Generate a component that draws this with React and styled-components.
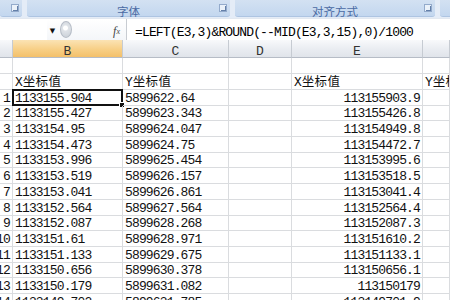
import styled, { createGlobalStyle } from 'styled-components';

const GlobalStyle = createGlobalStyle`
  html, body {
    margin: 0;
    padding: 0;
    background: #ffffff;
    overflow: hidden;
  }
`;

const Screen = styled.div`
  width: 450px;
  height: 300px;
  overflow: hidden;
  display: flex;
  flex-direction: column;
  font-family: 'Liberation Mono', 'Noto Sans CJK SC', monospace;
`;

/* ribbon group captions */
const Ribbon = styled.div`
  height: 18px;
  display: flex;
  gap: 5px;
  background: #e4ecf7;
  flex-shrink: 0;
`;

const Group = styled.div`
  position: relative;
  width: ${(p) => p.$w}px;
  flex-shrink: 0;
  height: 17px;
  background: linear-gradient(#d3e1f2, #c3d7ef);
  border-radius: 0 0 3px 3px;
  border-bottom: 1px solid #aec5e2;
  display: flex;
  align-items: center;
  justify-content: center;
  padding-top: 5px;
  box-sizing: border-box;
  font-family: 'Noto Sans CJK SC', sans-serif;
  font-size: 11.5px;
  color: #4a6aa3;
`;

const Launcher = styled.span`
  position: absolute;
  right: 3px;
  top: 4px;
  width: 8px;
  height: 8px;
  border: 1px solid #93aacb;
  background: #eaf1f9;
  box-sizing: border-box;
  &::after {
    content: '';
    position: absolute;
    right: 0;
    bottom: 0;
    width: 4px;
    height: 4px;
    border-right: 1px solid #6480a9;
    border-bottom: 1px solid #6480a9;
  }
`;

/* formula bar */
const FormulaBar = styled.div`
  height: 22px;
  display: flex;
  align-items: center;
  background: linear-gradient(#ffffff, #f4f6f9);
  border-top: 1px solid #e2e8f0;
  box-sizing: border-box;
  flex-shrink: 0;
`;

const NameBox = styled.div`
  width: 47px;
  height: 100%;
  background: #ffffff;
`;

const Arrow = styled.span`
  width: 11px;
  padding-top: 2px;
  font-size: 7px;
  color: #111;
  text-align: center;
  font-family: 'DejaVu Sans', sans-serif;
`;

const Handle = styled.span`
  width: 12px;
  height: 17px;
  margin-left: 2px;
  border-radius: 50%;
  border: 1px solid #b5bcc6;
  background: radial-gradient(circle at 45% 40%, #ffffff 0 2px, #dfe3e8 3px, #c8ced6 100%);
  box-sizing: border-box;
`;

const FxBox = styled.div`
  flex: 0 0 54px;
  height: 100%;
  display: flex;
  align-items: center;
  justify-content: flex-end;
  padding: 3px 6px 0 0;
  box-sizing: border-box;
  font-family: 'Liberation Serif', serif;
  font-style: italic;
  font-size: 12px;
  color: #444;
  sub {
    font-size: 8px;
    vertical-align: -1px;
  }
`;

const Formula = styled.div`
  flex: 1;
  height: 100%;
  background: #ffffff;
  border-left: 1px solid #c8ccd2;
  display: flex;
  align-items: center;
  padding: 5px 0 0 8px;
  box-sizing: border-box;
  font-size: 13px;
  letter-spacing: -0.85px;
  color: #000;
  white-space: nowrap;
`;

/* sheet */
const Sheet = styled.div`
  display: grid;
  grid-template-columns: 13px 110px 106px 63px 131px 27px;
  grid-template-rows: 18px 16px 16px repeat(14, 15.7px);
  overflow: hidden;
  flex-shrink: 0;
`;

const ColHead = styled.div`
  display: flex;
  align-items: center;
  justify-content: center;
  padding-top: 5px;
  border-right: 1px solid #c6cbd2;
  border-bottom: 1px solid #b6bcc6;
  background: ${(p) =>
    p.$active
      ? 'linear-gradient(#fbe3b4, #f7cf86 55%, #f3c06a)'
      : 'linear-gradient(#f8f9fb, #e9ecf1 55%, #e0e4ea)'};
  font-size: 13px;
  color: #333;
  box-sizing: border-box;
`;

const Cell = styled.div`
  position: relative;
  display: flex;
  align-items: flex-end;
  justify-content: ${(p) => (p.$right ? 'flex-end' : 'flex-start')};
  padding: 0 ${(p) => (p.$right ? '2px' : '0')} 0 ${(p) => (p.$right ? '0' : '2px')};
  border-right: 1px solid #dadcdf;
  border-bottom: 1px solid #dadcdf;
  box-sizing: border-box;
  font-size: 13px;
  letter-spacing: -0.85px;
  color: #111;
  white-space: nowrap;
  overflow: ${(p) => (p.$clip ? 'hidden' : 'visible')};
  line-height: 13px;
`;

const Label = styled.span`
  letter-spacing: 0;
  font-size: 13px;
  span {
    font-family: 'Noto Sans CJK SC', sans-serif;
    font-size: 12.5px;
    letter-spacing: 0.3px;
  }
`;

const Selection = styled.span`
  position: absolute;
  left: -1px;
  top: -1px;
  right: -1px;
  bottom: -1px;
  border: 2px solid #111;
  pointer-events: none;
  &::after {
    content: '';
    position: absolute;
    right: -4px;
    bottom: -4px;
    width: 4px;
    height: 4px;
    background: #111;
    border: 1px solid #fff;
  }
`;

const xs = [
  '1133155.904', '1133155.427', '1133154.95', '1133154.473', '1133153.996',
  '1133153.519', '1133153.041', '1133152.564', '1133152.087', '1133151.61',
  '1133151.133', '1133150.656', '1133150.179', '1133149.702',
];
const ys = [
  '5899622.64', '5899623.343', '5899624.047', '5899624.75', '5899625.454',
  '5899626.157', '5899626.861', '5899627.564', '5899628.268', '5899628.971',
  '5899629.675', '5899630.378', '5899631.082', '5899631.785',
];
const es = [
  '113155903.9', '113155426.8', '113154949.8', '113154472.7', '113153995.6',
  '113153518.5', '113153041.4', '113152564.4', '113152087.3', '113151610.2',
  '113151133.1', '113150656.1', '113150179', '113149701.9',
];

const Heading = ({ letter }) => (
  <Label>
    {letter}
    <span>坐标值</span>
  </Label>
);

export default function App() {
  return (
    <Screen>
      <GlobalStyle />
      <Ribbon>
        <Group $w={22}>
          <Launcher />
        </Group>
        <Group $w={203}>
          字体
          <Launcher />
        </Group>
        <Group $w={200}>
          对齐方式
          <Launcher />
        </Group>
        <Group $w={20} />
      </Ribbon>

      <FormulaBar>
        <NameBox />
        <Arrow>▼</Arrow>
        <Handle />
        <FxBox>
          f<sub>x</sub>
        </FxBox>
        <Formula>=LEFT(E3,3)&amp;ROUND(--MID(E3,3,15),0)/1000</Formula>
      </FormulaBar>

      <Sheet>
        <ColHead />
        <ColHead $active>B</ColHead>
        <ColHead>C</ColHead>
        <ColHead>D</ColHead>
        <ColHead>E</ColHead>
        <ColHead />

        <Cell />
        <Cell />
        <Cell />
        <Cell />
        <Cell />
        <Cell />

        <Cell />
        <Cell>
          <Heading letter="X" />
        </Cell>
        <Cell>
          <Heading letter="Y" />
        </Cell>
        <Cell />
        <Cell>
          <Heading letter="X" />
        </Cell>
        <Cell $clip>
          <Heading letter="Y" />
        </Cell>

        {xs.map((x, i) => [
          <Cell key={`a${i}`} $right $clip>
            {i + 1}
          </Cell>,
          <Cell key={`b${i}`}>
            {x}
            {i === 0 && <Selection />}
          </Cell>,
          <Cell key={`c${i}`}>{ys[i]}</Cell>,
          <Cell key={`d${i}`} />,
          <Cell key={`e${i}`} $right>
            {es[i]}
          </Cell>,
          <Cell key={`f${i}`} />,
        ])}
      </Sheet>
    </Screen>
  );
}
